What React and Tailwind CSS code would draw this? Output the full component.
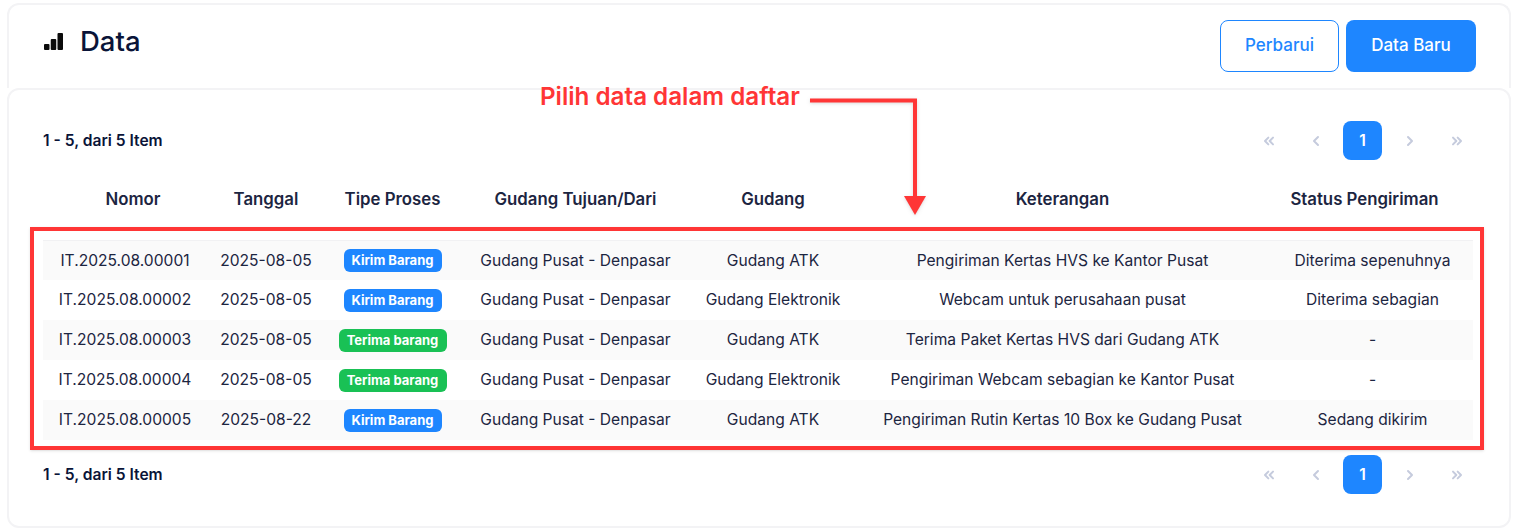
import { ChevronLeft, ChevronRight, ChevronsLeft, ChevronsRight } from 'lucide-react';

const font = { fontFamily: 'Inter, sans-serif' };

const rows = [
    ['IT.2025.08.00001', '2025-08-05', 'kirim', 'Gudang Pusat - Denpasar', 'Gudang ATK', 'Pengiriman Kertas HVS ke Kantor Pusat', 'Diterima sepenuhnya'],
    ['IT.2025.08.00002', '2025-08-05', 'kirim', 'Gudang Pusat - Denpasar', 'Gudang Elektronik', 'Webcam untuk perusahaan pusat', 'Diterima sebagian'],
    ['IT.2025.08.00003', '2025-08-05', 'terima', 'Gudang Pusat - Denpasar', 'Gudang ATK', 'Terima Paket Kertas HVS dari Gudang ATK', '-'],
    ['IT.2025.08.00004', '2025-08-05', 'terima', 'Gudang Pusat - Denpasar', 'Gudang Elektronik', 'Pengiriman Webcam sebagian ke Kantor Pusat', '-'],
    ['IT.2025.08.00005', '2025-08-22', 'kirim', 'Gudang Pusat - Denpasar', 'Gudang ATK', 'Pengiriman Rutin Kertas 10 Box ke Gudang Pusat', 'Sedang dikirim'],
];

function Badge({ type }) {
    return type === 'kirim' ? (
        <span className="inline-block h-[23px] w-[98px] rounded-md bg-[#1e86ff] text-[13px] leading-[23px] font-bold text-white">Kirim Barang</span>
    ) : (
        <span className="inline-block h-[23px] w-[108px] rounded-md bg-[#19c155] text-[13px] leading-[23px] font-bold text-white">Terima barang</span>
    );
}

function Pager() {
    return (
        <div className="flex items-center justify-between pr-[33px] pl-[34px]">
            <span className="text-[15.6px] font-semibold text-[#0a1438]">1 - 5, dari 5 Item</span>
            <div className="flex items-center text-[#c5cbdd]">
                <span className="flex h-[39px] w-[39px] items-center justify-center"><ChevronsLeft size={16} strokeWidth={3} /></span>
                <span className="ml-[8px] flex h-[39px] w-[39px] items-center justify-center"><ChevronLeft size={16} strokeWidth={3} /></span>
                <span className="ml-[8px] flex h-[39px] w-[39px] items-center justify-center rounded-lg bg-[#1e86ff] text-[15.5px] font-semibold text-white">1</span>
                <span className="ml-[8px] flex h-[39px] w-[39px] items-center justify-center"><ChevronRight size={16} strokeWidth={3} /></span>
                <span className="ml-[8px] flex h-[39px] w-[39px] items-center justify-center"><ChevronsRight size={16} strokeWidth={3} /></span>
            </div>
        </div>
    );
}

export default function App() {
    return (
        <div className="relative h-[532px] w-[1514px] overflow-hidden bg-white pt-[3px] pr-[3px] pl-[7px]" style={font}>
            {/* Header card */}
            <div className="flex h-[85px] items-start justify-between rounded-t-xl border-t-[2px] border-r-[2px] border-l-[2px] border-[#f3f3f5] bg-white pt-[15px] pr-[33px] pl-[35px]">
                <div className="flex items-center gap-[17px] pt-[2px]">
                    <svg width="19" height="18" viewBox="0 0 19 18">
                        <rect x="0" y="12" width="5.5" height="6" rx="1" fill="#0b0b0b" />
                        <rect x="6.75" y="7" width="5.5" height="11" rx="1" fill="#0b0b0b" />
                        <rect x="13.5" y="1" width="5.5" height="17" rx="1" fill="#0b0b0b" />
                    </svg>
                    <h1 className="text-[27.5px] leading-[38px] font-medium text-[#0a1438]">Data</h1>
                </div>
                <div className="flex gap-[7px]">
                    <button className="h-[52px] w-[119px] rounded-lg border border-[#1e86ff] bg-white text-[17px] font-medium text-[#1e86ff]">Perbarui</button>
                    <button className="h-[52px] w-[130px] rounded-lg bg-[#1e86ff] text-[17px] font-medium text-white">Data Baru</button>
                </div>
            </div>

            {/* Table card */}
            <div className="h-[440px] rounded-xl border-[2px] border-[#f3f3f5] bg-white pt-[31px]">
                <Pager />
                <table className="ml-[34px] w-[1430px] table-fixed border-collapse text-center text-[15.6px] text-[#1c2541]">
                    <colgroup>
                        <col className="w-[164px]" />
                        <col className="w-[118px]" />
                        <col className="w-[135px]" />
                        <col className="w-[231px]" />
                        <col className="w-[164px]" />
                        <col className="w-[417px]" />
                        <col className="w-[201px]" />
                    </colgroup>
                    <thead>
                        <tr className="h-[80px] border-b border-[#f1f1f3] text-[16.8px]">
                            <th className="pl-4 font-semibold">Nomor</th>
                            <th className="font-semibold">Tanggal</th>
                            <th className="font-semibold">Tipe Proses</th>
                            <th className="font-semibold">Gudang Tujuan/Dari</th>
                            <th className="font-semibold">Gudang</th>
                            <th className="pr-[2px] font-semibold">Keterangan</th>
                            <th className="pr-4 font-semibold">Status Pengiriman</th>
                        </tr>
                    </thead>
                    <tbody>
                        {rows.map((r, i) => (
                            <tr key={r[0]} className={`h-10 ${i % 2 === 0 ? 'bg-[#fafafa]' : 'bg-white'}`}>
                                <td>{r[0]}</td>
                                <td>{r[1]}</td>
                                <td><Badge type={r[2]} /></td>
                                <td>{r[3]}</td>
                                <td>{r[4]}</td>
                                <td className="pr-[2px]">{r[5]}</td>
                                <td>{r[6]}</td>
                            </tr>
                        ))}
                    </tbody>
                </table>
                <div className="mt-[15px]">
                    <Pager />
                </div>
            </div>

            {/* Annotation */}
            <span className="absolute top-[81px] left-[540px] text-[24.2px] leading-8 font-semibold text-[#ff3636]">Pilih data dalam daftar</span>
            <svg className="absolute top-[97px] left-[808px] drop-shadow" width="122" height="122" viewBox="0 0 122 122" fill="none">
                <path d="M2 3.5H107V100" stroke="#ff3636" strokeWidth="4" />
                <path d="M96 99H118L107 118Z" fill="#ff3636" />
            </svg>
            <div className="absolute top-[227px] left-[30px] h-[223px] w-[1454px] border-[4px] border-[#ff3636] shadow" />
        </div>
    );
}
